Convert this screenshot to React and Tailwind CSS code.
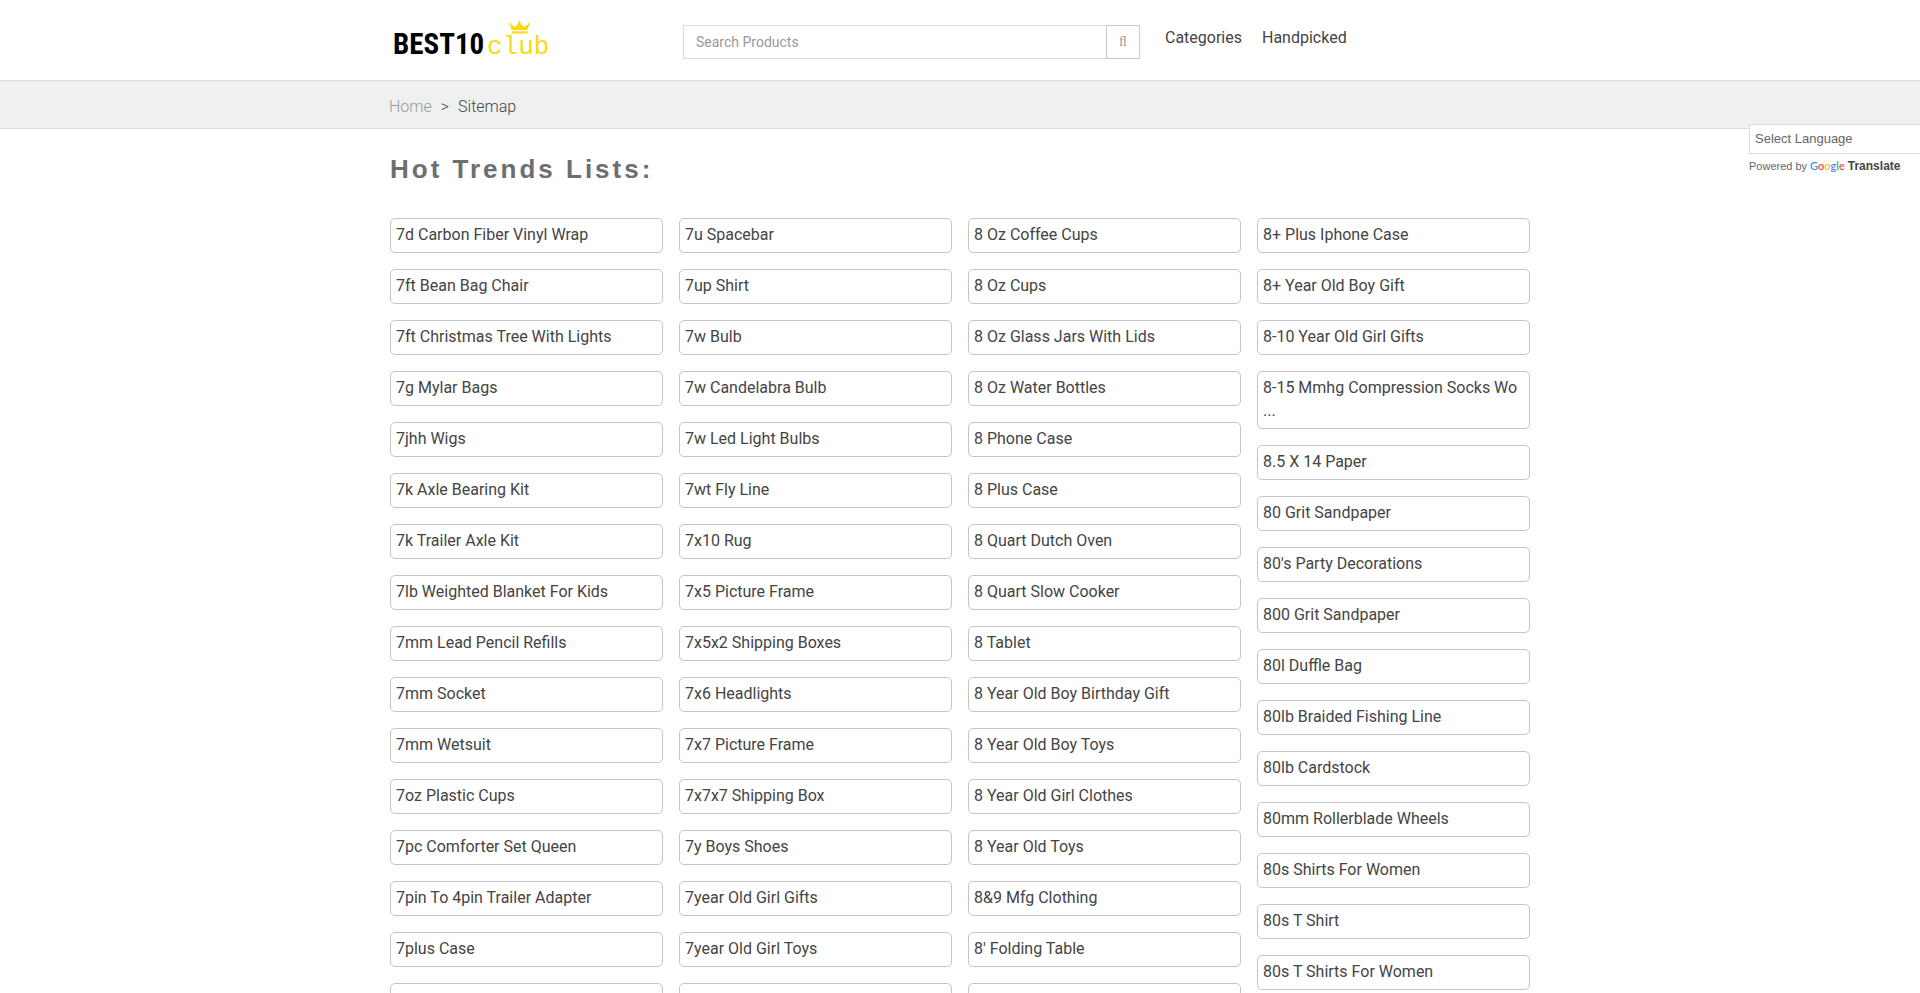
import React from 'react'

const columns = [
    [
        '7d Carbon Fiber Vinyl Wrap', '7ft Bean Bag Chair', '7ft Christmas Tree With Lights', '7g Mylar Bags',
        '7jhh Wigs', '7k Axle Bearing Kit', '7k Trailer Axle Kit', '7lb Weighted Blanket For Kids',
        '7mm Lead Pencil Refills', '7mm Socket', '7mm Wetsuit', '7oz Plastic Cups',
        '7pc Comforter Set Queen', '7pin To 4pin Trailer Adapter', '7plus Case', '7qt Slow Cooker',
    ],
    [
        '7u Spacebar', '7up Shirt', '7w Bulb', '7w Candelabra Bulb',
        '7w Led Light Bulbs', '7wt Fly Line', '7x10 Rug', '7x5 Picture Frame',
        '7x5x2 Shipping Boxes', '7x6 Headlights', '7x7 Picture Frame', '7x7x7 Shipping Box',
        '7y Boys Shoes', '7year Old Girl Gifts', '7year Old Girl Toys', '8 Cups',
    ],
    [
        '8 Oz Coffee Cups', '8 Oz Cups', '8 Oz Glass Jars With Lids', '8 Oz Water Bottles',
        '8 Phone Case', '8 Plus Case', '8 Quart Dutch Oven', '8 Quart Slow Cooker',
        '8 Tablet', '8 Year Old Boy Birthday Gift', '8 Year Old Boy Toys', '8 Year Old Girl Clothes',
        '8 Year Old Toys', '8&9 Mfg Clothing', "8' Folding Table", "8' Led Bulbs",
    ],
    [
        '8+ Plus Iphone Case', '8+ Year Old Boy Gift', '8-10 Year Old Girl Gifts', '8-15 Mmhg Compression Socks Wo ...',
        '8.5 X 14 Paper', '80 Grit Sandpaper', "80's Party Decorations", '800 Grit Sandpaper',
        '80l Duffle Bag', '80lb Braided Fishing Line', '80lb Cardstock', '80mm Rollerblade Wheels',
        '80s Shirts For Women', '80s T Shirt', '80s T Shirts For Women',
    ],
]

const Logo = () => (
    <a href="#" className="relative flex items-baseline pl-[3px] leading-10">
        <span className="w-[94px] font-['Roboto_Condensed','Roboto',sans-serif] text-[29px] font-bold text-black">BEST10</span>
        <span className="font-['Liberation_Mono',monospace] text-[26px] text-[#fdd817]">club</span>
        <svg className="absolute -top-[3px] left-[119px] h-[13px] w-[21px]" viewBox="0 0 21 14" preserveAspectRatio="none" fill="#fdd817" aria-hidden="true">
            <path d="M2.6 9.8 1 4.2a1 1 0 1 1 1-.3L6.2 6.4 9.8 2a1.1 1.1 0 1 1 1.4 0L14.8 6.4 19 3.9a1 1 0 1 1 1 .3L18.4 9.8zM2.6 11h15.8v2.4H2.6z" />
        </svg>
    </a>
)

const Header = () => (
    <header className="h-20">
        <div className="mx-auto flex max-w-[1140px] items-start">
            <div className="w-[293px] pt-6"><Logo /></div>
            <form className="mt-[25px] flex h-[34px] w-[457px]">
                <input
                    type="text"
                    aria-label="Search Products"
                    placeholder="Search Products"
                    className="min-w-0 flex-1 border border-r-0 border-[#dcdcdc] px-3 text-sm outline-none placeholder:text-[#999]"
                />
                <button type="button" aria-label="Search" className="w-[34px] border border-[#c8c8c8] font-['Liberation_Serif',serif] text-sm text-[#999]">ﬂ</button>
            </form>
            <nav className="ml-[25px] flex gap-5 pt-[26px] leading-6 text-[#444]">
                <a href="#">Categories</a>
                <a href="#">Handpicked</a>
            </nav>
        </div>
    </header>
)

const Translate = () => (
    <div className="absolute top-[124px] right-0 w-[171px] font-['Liberation_Sans',Arial,sans-serif] text-[#666]">
        <select aria-label="Select Language" className="block h-[30px] w-full appearance-none border border-r-0 border-[#ddd] bg-white px-[5px] text-[13px] outline-none">
            <option>Select Language</option>
        </select>
        <div className="flex items-baseline pt-1 text-[11px] leading-4">
            <span>Powered by</span>
            <a href="#" className="ml-[3px] flex items-baseline gap-[3px]">
                <span className="font-['Lato',sans-serif] text-[11px] font-medium">
                    <span className="text-[#4285f4]">G</span>
                    <span className="text-[#ea4335]">o</span>
                    <span className="text-[#fbbc05]">o</span>
                    <span className="text-[#4285f4]">g</span>
                    <span className="text-[#34a853]">l</span>
                    <span className="text-[#ea4335]">e</span>
                </span>
                <span className="text-xs font-bold text-[#444]">Translate</span>
            </a>
        </div>
    </div>
)

const App = () => {
    return (
        <div className="relative bg-white font-['Roboto',sans-serif] text-base text-[#444]">
            <Header />
            <div className="border-y border-[#dcdcdc] bg-[#eef1f0]">
                <div className="mx-auto flex h-[47px] max-w-[1142px] items-center pt-1 font-light">
                    <a href="#" className="text-[#999]">Home</a>
                    <span className="mx-[9px]">&gt;</span>
                    <span>Sitemap</span>
                </div>
            </div>
            <Translate />
            <main className="mx-auto max-w-[1140px]">
                <h1 className="pt-6 font-['Liberation_Sans',Arial,sans-serif] text-[26px] leading-8 font-bold tracking-[3px] text-[#6d6e71]">
                    Hot Trends Lists:
                </h1>
                <div className="mt-[33px] grid grid-cols-4 items-start gap-4">
                    {columns.map((items, i) => (
                        <ul key={i} className="flex flex-col gap-4">
                            {items.map((item) => (
                                <li key={item}>
                                    <a href="#" className="block rounded-[5px] border border-[#c4c4c4] px-[5px] pt-1 pb-1.5 leading-[23px]">{item}</a>
                                </li>
                            ))}
                        </ul>
                    ))}
                </div>
            </main>
        </div>
    )
}

export default App
